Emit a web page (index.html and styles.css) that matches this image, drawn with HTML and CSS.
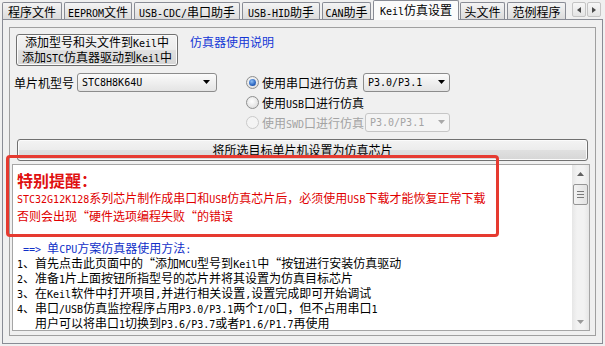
FILE: index.html
```html
<!DOCTYPE html>
<html lang="zh-CN">
<head>
<meta charset="utf-8">
<title>Keil仿真设置</title>
<link rel="stylesheet" href="styles.css">
</head>
<body>
<div class="tabstrip">
  <div class="tab t-prog">程序文件</div>
  <div class="tab t-eeprom"><span class="en">EEPROM</span>文件</div>
  <div class="tab t-cdc"><span class="en">USB-CDC/</span>串口助手</div>
  <div class="tab t-hid"><span class="en">USB-HID</span>助手</div>
  <div class="tab t-can"><span class="en">CAN</span>助手</div>
  <div class="tab active t-keil"><span class="en">Keil</span>仿真设置</div>
  <div class="tab t-head">头文件</div>
  <div class="tab t-demo">范例程序</div>
  <div class="tab-scroll">
    <div class="arrow-btn"><svg width="4" height="6" viewBox="0 0 4 6"><path d="M4 0 L0 3 L4 6 Z" fill="#4a4a4a"/></svg></div>
    <div class="arrow-btn"><svg width="4" height="6" viewBox="0 0 4 6"><path d="M0 0 L4 3 L0 6 Z" fill="#4a4a4a"/></svg></div>
  </div>
</div>
<div class="panel">
  <div class="group">
    <div class="top-row">
      <button class="btn btn-add">添加型号和头文件到<span class="en">Keil</span>中<br>添加<span class="en">STC</span>仿真器驱动到<span class="en">Keil</span>中</button>
      <span class="link">仿真器使用说明</span>
    </div>
    <div class="config">
      <div class="mcu-row">
        <span class="label">单片机型号</span>
        <div class="combo combo-mcu"><span class="en">STC8H8K64U</span><svg width="7" height="4" viewBox="0 0 7 4"><path d="M0 0 H7 L3.5 4 Z" fill="#000"/></svg></div>
      </div>
      <div class="radios">
        <div class="radio-row">
          <span class="radio checked"></span>
          <span class="rtext">使用串口进行仿真</span>
          <div class="combo combo-port"><span class="en">P3.0/P3.1</span><svg width="7" height="4" viewBox="0 0 7 4"><path d="M0 0 H7 L3.5 4 Z" fill="#000"/></svg></div>
        </div>
        <div class="radio-row">
          <span class="radio"></span>
          <span class="rtext">使用<span class="en">USB</span>口进行仿真</span>
        </div>
        <div class="radio-row disabled">
          <span class="radio"></span>
          <span class="rtext">使用<span class="en">SWD</span>口进行仿真</span>
          <div class="combo combo-port"><span class="en">P3.0/P3.1</span><svg width="7" height="4" viewBox="0 0 7 4"><path d="M0 0 H7 L3.5 4 Z" fill="#a8a8a8"/></svg></div>
        </div>
      </div>
    </div>
    <button class="btn btn-wide">将所选目标单片机设置为仿真芯片</button>
    <div class="memo">
      <div class="memo-text">
        <div class="warn-title">特别提醒：</div>
        <div class="warn"><span class="en">STC32G12K128</span>系列芯片制作成串口和<span class="en">USB</span>仿真芯片后，必须使用<span class="en">USB</span>下载才能恢复正常下载</div>
        <div class="warn">否则会出现“硬件选项编程失败“的错误</div>
        <div class="line"></div>
        <div class="line blue"><span class="en"> ==&gt; </span>单<span class="en">CPU</span>方案仿真器使用方法<span class="en">:</span></div>
        <div class="line"><span class="en">1</span>、首先点击此页面中的“添加<span class="en">MCU</span>型号到<span class="en">Keil</span>中“按钮进行安装仿真驱动</div>
        <div class="line"><span class="en">2</span>、准备<span class="en">1</span>片上面按钮所指型号的芯片并将其设置为仿真目标芯片</div>
        <div class="line"><span class="en">3</span>、在<span class="en">Keil</span>软件中打开项目<span class="en">,</span>并进行相关设置<span class="en">,</span>设置完成即可开始调试</div>
        <div class="line"><span class="en">4</span>、串口<span class="en">/USB</span>仿真监控程序占用<span class="en">P3.0/P3.1</span>两个<span class="en">I/O</span>口，但不占用串口<span class="en">1</span></div>
        <div class="line indent">用户可以将串口<span class="en">1</span>切换到<span class="en">P3.6/P3.7</span>或者<span class="en">P1.6/P1.7</span>再使用</div>
      </div>
      <div class="scrollbar">
        <div class="sb-arrow"><svg width="7" height="4" viewBox="0 0 7 4"><path d="M0 4 H7 L3.5 0 Z" fill="#606060"/></svg></div>
        <div class="sb-thumb"><span></span><span></span><span></span></div>
        <div class="sb-track"></div>
        <div class="sb-arrow"><svg width="7" height="4" viewBox="0 0 7 4"><path d="M0 0 H7 L3.5 4 Z" fill="#9a9a9a"/></svg></div>
      </div>
    </div>
    <div class="callout"></div>
  </div>
</div>
</body>
</html>
```

FILE: styles.css
```css
* { box-sizing: border-box; }
html, body { margin: 0; padding: 0; }
body {
  width: 605px;
  height: 346px;
  overflow: hidden;
  background: #f0f0f0;
  color: #000;
  font-family: "Noto Sans CJK SC", "Noto Sans", sans-serif;
  font-size: 12px;
}
.en {
  font-family: "DejaVu Sans Mono", "Liberation Mono", monospace;
  font-size: 10px;
  white-space: pre;
}

/* tab strip */
.tabstrip {
  display: flex;
  align-items: flex-end;
  height: 20px;
  padding-left: 2px;
}
.tab {
  flex: none;
  height: 17px;
  margin: 0 2px 1px 0;
  padding-top: 1px;
  border: 1px solid #898c95;
  border-bottom: none;
  border-radius: 2px 2px 0 0;
  background: linear-gradient(#f4f4f4, #e8e8e8 50%, #dcdcdc);
  line-height: 15px;
  text-align: center;
  white-space: nowrap;
}
.t-prog { width: 60px; }
.t-eeprom { width: 68px; }
.t-cdc { width: 106px; }
.t-hid { width: 78px; }
.t-can { width: 49px; }
.t-keil { width: 86px; }
.t-head { width: 45px; }
.t-demo { width: 59px; }
.tab.active {
  position: relative;
  z-index: 2;
  height: 20px;
  margin: 0 1px 0 0;
  background: #fbfbfb;
  line-height: 16px;
}
.tab-scroll {
  display: flex;
  gap: 1px;
  margin: 0 0 3px 4px;
}
.arrow-btn {
  display: flex;
  align-items: center;
  justify-content: center;
  width: 14px;
  height: 15px;
  border: 1px solid #c4c4c4;
  border-radius: 2px;
  background: linear-gradient(#f7f7f7, #e4e4e4);
}

/* page panel */
.panel {
  height: 325px;
  margin: -1px 2px 0;
  padding: 7px 6px;
  border: 1px solid #898c95;
  background: #f0f0f0;
}
.group {
  position: relative;
  height: 309px;
  border: 1px solid #a0a0a0;
}
.top-row {
  display: flex;
  align-items: flex-start;
  margin: 6px 0 0 6px;
}
.btn {
  margin: 0;
  padding: 0;
  font: inherit;
  color: #000;
  border: 1px solid #707070;
  border-radius: 3px;
  background: linear-gradient(#f3f3f3 0%, #ececec 48%, #e0e0e0 52%, #d6d6d6 100%);
  box-shadow: inset 0 0 0 1px #fbfbfb;
}
.btn-add {
  width: 162px;
  height: 32px;
  line-height: 13px;
}
.link {
  margin-left: 12px;
  line-height: 16px;
  color: #1437d6;
}

.config {
  display: flex;
  margin-top: 6px;
  height: 60px;
}
.mcu-row {
  display: flex;
  align-items: center;
  height: 20px;
  margin-left: 4px;
}
.label { width: 63px; }
.combo {
  display: flex;
  align-items: center;
  justify-content: space-between;
  height: 19px;
  padding: 0 4px 0 4px;
  border: 1px solid #8c8c8c;
  border-radius: 3px;
  background: linear-gradient(#fbfbfb, #efefef 50%, #e4e4e4);
}
.combo-mcu { width: 140px; }
.combo-mcu svg { margin-right: 2px; }
.combo-port { width: 87px; }
.radios {
  display: flex;
  flex-direction: column;
  margin-left: 29px;
}
.radio-row {
  display: grid;
  grid-template-columns: 16px 101px 87px;
  align-items: center;
  height: 20px;
}
.rtext { white-space: nowrap; }
.radio {
  position: relative;
  width: 13px;
  height: 13px;
  border: 1px solid #8e8f8f;
  border-radius: 50%;
  background: radial-gradient(circle at 45% 40%, #ffffff, #e2e2e2 70%, #d2d2d2);
}
.radio.checked::after {
  content: "";
  position: absolute;
  left: 2px;
  top: 2px;
  width: 7px;
  height: 7px;
  border-radius: 50%;
  background: radial-gradient(circle at 40% 35%, #8fc0f5, #2a64c0 60%, #163e85);
}
.disabled { color: #a3a3a3; }
.disabled .radio {
  border-color: #cacaca;
  background: #f4f4f4;
}
.disabled .combo {
  border-color: #c6c6c6;
  background: #f4f4f4;
  margin-left: 2px;
  width: 85px;
}

.btn-wide {
  display: block;
  width: 571px;
  height: 22px;
  margin: 7px 0 0 7px;
  line-height: 18px;
}

/* memo */
.memo {
  display: flex;
  width: 578px;
  height: 167px;
  margin: 3px 0 0 2px;
  border: 1px solid #a5a5a5;
  background: #fff;
}
.memo-text {
  flex: 1;
  overflow: hidden;
  padding: 6px 0 0 4px;
  white-space: nowrap;
}
.warn-title {
  height: 18px;
  line-height: 18px;
  font-size: 16px;
  font-weight: bold;
  color: #e01010;
}
.warn {
  height: 18px;
  line-height: 18px;
  color: #e00000;
}
.line {
  height: 15px;
  line-height: 15px;
}
.blue { color: #1030c8; }
.indent { padding-left: 18px; }

.scrollbar {
  display: flex;
  flex-direction: column;
  width: 17px;
  background: linear-gradient(90deg, #e6e6e6, #f2f2f2 30%, #f2f2f2 70%, #e6e6e6);
}
.sb-arrow {
  display: flex;
  align-items: center;
  justify-content: center;
  height: 17px;
  flex: none;
}
.sb-thumb {
  display: flex;
  flex-direction: column;
  justify-content: center;
  align-items: center;
  gap: 2px;
  height: 21px;
  margin: 2px 1px 0;
  border: 1px solid #959595;
  border-radius: 2px;
  background: linear-gradient(90deg, #f3f3f3, #e2e2e2);
}
.sb-thumb span {
  width: 7px;
  height: 1px;
  background: #7a7a7a;
}
.sb-track { flex: 1; }

/* red annotation drawn over the page */
.callout {
  position: absolute;
  left: -4px;
  top: 127px;
  width: 493px;
  height: 82px;
  border: 3px solid #e63a30;
  border-radius: 4px;
  pointer-events: none;
}
```
